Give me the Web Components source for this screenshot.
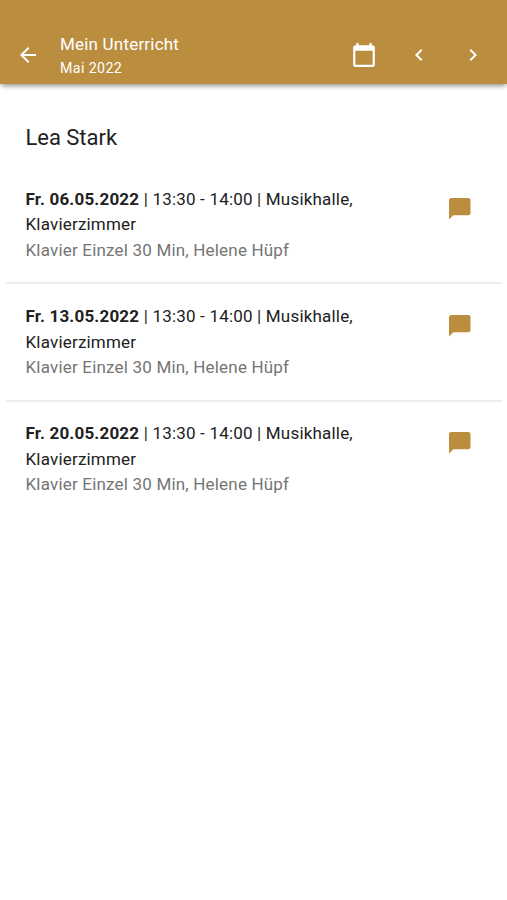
<!DOCTYPE html>
<html lang="de"><head><meta charset="utf-8"><title>Mein Unterricht</title>
<style>body{margin:0;background:#fff;font-family:Roboto,sans-serif;color:#212121}</style></head><body>
<lesson-app></lesson-app>
<script>
const define=(name,html)=>customElements.define(name,class extends HTMLElement{
  constructor(){super();this.attachShadow({mode:'open'}).innerHTML=html}
});
define('app-bar',`<style>
:host{display:flex;box-sizing:border-box;height:84px;padding:26px 22px 0 16px;align-items:center;background:#ba8d3f;color:#fff;box-shadow:0 3px 5px -1px rgba(0,0,0,.3),0 1px 6px -1px rgba(0,0,0,.25)}
svg{display:block;fill:currentColor;flex:none}
.titles{flex:1;margin-left:20px;padding-top:2px;white-space:nowrap}
.title{font-size:17px;line-height:24px;letter-spacing:.2px}
.sub{font-size:14.2px;line-height:24px;letter-spacing:.4px}
.actions{display:flex;align-items:center;gap:30px}
</style>
<svg width="24" height="24" viewBox="0 0 24 24"><path d="M20 11H7.83l5.59-5.59L12 4l-8 8 8 8 1.41-1.41L7.83 13H20z"/></svg>
<div class="titles"><div class="title"><slot name="title"></slot></div><div class="sub"><slot name="subtitle"></slot></div></div>
<div class="actions">
<svg width="26" height="26" viewBox="0 0 24 24"><path d="M20 3h-1V1h-2v2H7V1H5v2H4c-1.1 0-2 .9-2 2v16c0 1.1.9 2 2 2h16c1.1 0 2-.9 2-2V5c0-1.1-.9-2-2-2zm0 18H4V8h16v13z"/></svg>
<svg width="24" height="24" viewBox="0 0 24 24"><path d="M15.41 7.41L14 6l-6 6 6 6 1.41-1.41L10.83 12z"/></svg>
<svg width="24" height="24" viewBox="0 0 24 24"><path d="M10 6L8.59 7.41 13.17 12l-4.58 4.59L10 18l6-6z"/></svg>
</div>`);
define('lesson-row',`<style>
:host{display:flex;box-sizing:border-box;height:117.3px;margin:0 5px 0 6px;padding:19.8px 31.5px 0 19.5px;justify-content:space-between;align-items:flex-start;font-size:17px;line-height:25.5px;letter-spacing:.19px;border-bottom:2px solid #eee}
:host([last]){border-bottom:0}
.text{width:345px}
.note{color:#757575}
svg{display:block;margin-top:11px;fill:#ba8d3f}
b{font-weight:700}
</style>
<div class="text"><b><slot name="date"></slot></b> | <slot name="time"></slot> <slot name="room"></slot><div class="note"><slot name="note"></slot></div></div>
<svg width="21.5" height="21.5" viewBox="2 2 20 20"><path d="M20 2H4c-1.1 0-2 .9-2 2v18l4-4h14c1.1 0 2-.9 2-2V4c0-1.1-.9-2-2-2z"/></svg>`);
define('lesson-app',`<style>
:host{display:block}
h1{margin:0;padding:40px 25.5px 28.1px;font-size:22px;font-weight:400;line-height:28px;height:15px;letter-spacing:-.03px}
</style>
<app-bar><span slot="title">Mein Unterricht</span><span slot="subtitle">Mai 2022</span></app-bar>
<h1>Lea Stark</h1>
${['06','13','20'].map((d,i)=>`<lesson-row${i==2?' last':''}><span slot="date">Fr. ${d}.05.2022</span><span slot="time">13:30 - 14:00 | Musikhalle,</span><span slot="room">Klavierzimmer</span><span slot="note">Klavier Einzel 30 Min, Helene Hüpf</span></lesson-row>`).join('')}`);
</script></body></html>
